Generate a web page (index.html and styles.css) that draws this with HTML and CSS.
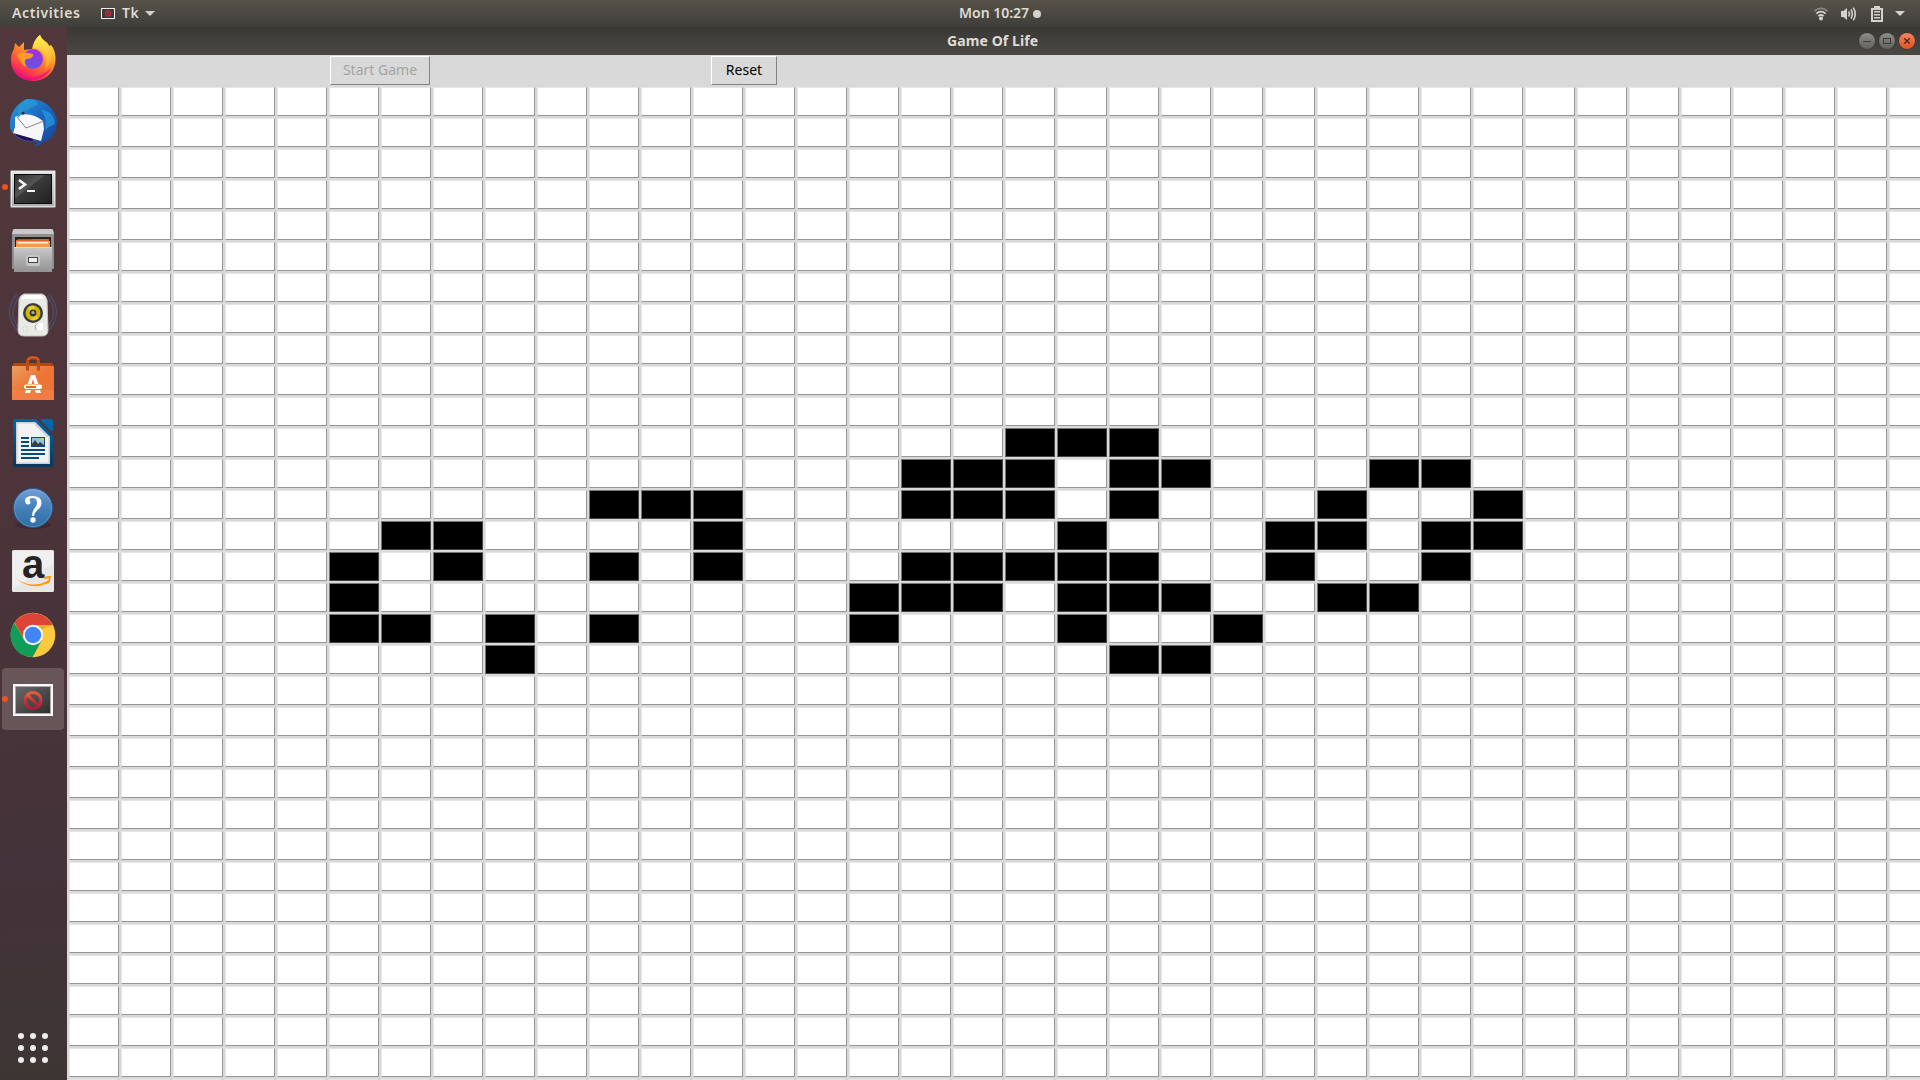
FILE: index.html
```html
<!DOCTYPE html>
<html lang="en">
<head>
<meta charset="utf-8">
<title>Game Of Life</title>
<link rel="stylesheet" href="styles.css">
</head>
<body>
<div class="desktop">
  <header class="topbar">
    <div class="topbar-left">
      <span class="activities">Activities</span>
      <svg class="app-mini" width="14" height="12" viewBox="0 0 14 12"><rect x=".5" y=".5" width="13" height="10" fill="#3b3b3b" stroke="#eee"/><circle cx="7" cy="5.5" r="2.6" fill="none" stroke="#c92a35" stroke-width="1.3"/><path d="M5.2 3.7l3.6 3.6" stroke="#c92a35" stroke-width="1.2"/></svg>
      <span class="app-name">Tk</span>
      <svg width="10" height="6" viewBox="0 0 10 6"><path d="M0 0h10L5 5z" fill="#d4d2cc"/></svg>
    </div>
    <div class="clock"><span class="clock-text">Mon 10:27</span><i class="clock-dot"></i></div>
    <div class="status">
      <svg width="14" height="14" viewBox="0 0 14 14" fill="none" stroke="#d4d2cc" stroke-width="1.7"><path d="M.5 4Q7-1.4 13.5 4" stroke="#8b8981"/><path d="M2.3 6.7Q7 2.6 11.7 6.7"/><path d="M4.3 9.2Q7 6.8 9.7 9.2"/><circle cx="7" cy="11.6" r="2" fill="#d4d2cc" stroke="none"/></svg>
      <svg width="16" height="14" viewBox="0 0 16 14" fill="none" stroke="#d4d2cc" stroke-width="1.6"><path d="M0 4h2.5L6 1v12L2.500 10H0z" fill="#d4d2cc" stroke="none"/><path d="M7.500 4.500Q9.500 7 7.500 9.500M10 2.500Q12.700 7 10 11.500M12.300 .6Q16.200 7 12.300 13.400"/></svg>
      <svg width="12" height="16" viewBox="0 0 12 16"><path d="M3 0h6v2h3v14H0V2h3zM2 4v10h8V4z" fill="#d4d2cc" fill-rule="evenodd"/><path d="M3 5h6v1.500H3zM3 8h6v1.500H3zM3 11h6v1.500H3z" fill="#d4d2cc"/></svg>
      <svg width="10" height="6" viewBox="0 0 10 6"><path d="M0 0h10L5 5z" fill="#d4d2cc"/></svg>
    </div>
  </header>

  <div class="workspace">
    <nav class="dock">
      <div class="dock-item">
        <svg width="48" height="48" viewBox="0 0 48 48">
          <defs>
            <linearGradient id="ffBody" x1=".85" y1="0" x2=".3" y2="1"><stop offset="0" stop-color="#fff44f"/><stop offset=".3" stop-color="#ffb62d"/><stop offset=".55" stop-color="#ff7a2b"/><stop offset=".8" stop-color="#ff3d48"/><stop offset="1" stop-color="#e5008c"/></linearGradient>
            <linearGradient id="ffFlame" x1="0" y1="0" x2="0" y2="1"><stop offset="0" stop-color="#fff44f"/><stop offset="1" stop-color="#ff9a28"/></linearGradient>
            <linearGradient id="ffGlobe" x1=".7" y1="0" x2=".3" y2="1"><stop offset="0" stop-color="#a62be0"/><stop offset="1" stop-color="#5a5be6"/></linearGradient>
          </defs>
          <path d="M31 0c2 6 8 6 9 11l2-1c5 6 5 14 4 19-2 10-11 17-22 17C11 46 2 37 2 25c0-5 1-8 3-11l1-6 4 4 5-5v8l8-1c1-6 4-11 8-14z" fill="url(#ffBody)"/>
          <path d="M31 0c2 6 9 8 11 16 2 9-2 15-6 18 2-8 0-15-4-19-4-1-7-3-8-1 0-7 4-12 7-14z" fill="url(#ffFlame)"/>
          <circle cx="24" cy="24" r="10" fill="url(#ffGlobe)"/>
          <path d="M8 20c5-4 9-2 16-1 1 3-3 5-7 5-2 2-1 5 1 8-6-1-7-8-10-12z" fill="#ff9b2a"/>
          <path d="M4 34c6 10 24 13 38-1-5 14-30 18-38 1z" fill="#e8107d" opacity=".75"/>
        </svg>
      </div>
      <div class="dock-item">
        <svg width="48" height="48" viewBox="0 0 48 48">
          <defs><linearGradient id="tbBlue" x1="0" y1="0" x2="1" y2="1"><stop offset="0" stop-color="#2d9ae0"/><stop offset=".5" stop-color="#1c66bd"/><stop offset="1" stop-color="#1b3f91"/></linearGradient></defs>
          <path d="M18 0C32-1 46 7 48 22c0 10-5 18-12 22l2-5c-4 5-7 8-13 8l5-5C14 45 4 37 1 29c-1-13 5-24 17-29z" fill="url(#tbBlue)"/>
          <path d="M4 32c2 6 11 10 20 10l-1-5z" fill="#260c55"/>
          <path d="M6 18l5-2q12-3 23 6l1 8-3 12L4 34l2-6z" fill="#f7f7f9"/>
          <path d="M8 18l9 11 18-7" fill="none" stroke="#888" stroke-width="1"/>
          <path d="M18 0c-6 2-11 8-9 19 4-4 4-7 10-8 2-3 8-4 10-6-3-4-7-5-11-5z" fill="#2793d4"/>
          <path d="M32 11c8 0 13 5 14 13-3 4-5 1-10 8 1-8 1-15-4-21z" fill="#249be3" opacity=".7"/>
          <circle cx="14" cy="14" r="1.500" fill="#302a30"/>
        </svg>
      </div>
      <div class="dock-item running">
        <svg width="48" height="48" viewBox="0 0 48 48">
          <defs>
            <linearGradient id="tmFrame" x1="0" y1="0" x2="0" y2="1"><stop offset="0" stop-color="#e6e6e6"/><stop offset="1" stop-color="#a9a9a9"/></linearGradient>
            <linearGradient id="tmScreen" x1="0" y1="0" x2="1" y2="1"><stop offset="0" stop-color="#333"/><stop offset=".4" stop-color="#555"/><stop offset=".43" stop-color="#3b3b3b"/><stop offset="1" stop-color="#202020"/></linearGradient>
          </defs>
          <rect x="1.500" y="7.500" width="45" height="37" rx="1" fill="url(#tmFrame)" stroke="#8b8b8b"/>
          <rect x="2.500" y="8.500" width="43" height="35" fill="none" stroke="#f4f4f4" stroke-opacity=".7"/>
          <rect x="5" y="11" width="38" height="30" fill="#0a0a0a"/>
          <rect x="6" y="12" width="36" height="28" fill="url(#tmScreen)"/>
          <path d="M10 17l6 4.500-6 4.500" fill="none" stroke="#f5f5f5" stroke-width="2.600"/><path d="M18 27h8v2h-8z" fill="#f5f5f5"/>
        </svg>
      </div>
      <div class="dock-item">
        <svg width="48" height="48" viewBox="0 0 48 48">
          <defs><linearGradient id="flGrey" x1="0" y1="0" x2="0" y2="1"><stop offset="0" stop-color="#c8c8c8"/><stop offset="1" stop-color="#939393"/></linearGradient></defs>
          <path d="M4 3q0-1 2-1h36q2 0 2 1l1 4v35H3V7z" fill="#8f8f8f"/>
          <path d="M4 3q0-1 2-1h36q2 0 2 1l1 4H3z" fill="#c9c9c9"/>
          <rect x="6" y="10" width="36" height="10" fill="#25201e"/>
          <path d="M9 12h31v7H7v-5z" fill="#c44a1e"/><path d="M7 13h16l1-1h16v2H7z" fill="#e0602a"/><path d="M7 14h34v6H7z" fill="#f39b48"/><path d="M9 15h30v1.500H9z" fill="#fff1df"/>
          <path d="M5 20h38v25H5z" fill="url(#flGrey)"/><path d="M5 20h38v1H5z" fill="#ddd"/>
          <rect x="17" y="28" width="14" height="11" rx="2" fill="#c5c5c5"/><rect x="19.500" y="30.500" width="9" height="5" fill="#eee" stroke="#444"/>
        </svg>
      </div>
      <div class="dock-item">
        <svg width="48" height="48" viewBox="0 0 48 48">
          <g fill="none" stroke="#4d5f96" stroke-width="1.300" opacity=".5"><path d="M8 3Q-7 21 8 39M11 5Q-2 21 9 36M40 3Q55 21 40 39M39 6Q50 21 39 36"/></g>
          <path d="M15 3h18q4 1 5 6l1 30q0 6-6 6H15q-6 0-6-6l1-30q1-5 5-6z" fill="#e9e9e6" stroke="#c4c4c0"/>
          <path d="M17 4h14q3 0 4 4H13q1-4 4-4z" fill="#fff"/>
          <circle cx="24" cy="22" r="10" fill="#3a3b3d"/><circle cx="24" cy="22" r="7.500" fill="#d3b500"/><path d="M24 22l-6-5a8 8 0 0 1 8-2zM24 22l6 5a8 8 0 0 1-8 2z" fill="#f2de3e" opacity=".6"/><circle cx="24" cy="22" r="3.400" fill="#34383b"/><circle cx="24" cy="21.500" r="1.600" fill="#aaa"/>
          <path d="M27 35l2-3h5v7h-5z" fill="#fff"/><path d="M27 39l-1-4 3-3" fill="none" stroke="#aaa"/><rect x="14.500" y="35.500" width="4" height="5" fill="none" stroke="#ddd"/>
        </svg>
      </div>
      <div class="dock-item">
        <svg width="48" height="48" viewBox="0 0 48 48">
          <defs><linearGradient id="swBag" x1="0" y1="0" x2="1" y2="1"><stop offset="0" stop-color="#e9a061"/><stop offset=".5" stop-color="#ee7434"/><stop offset="1" stop-color="#f0703a"/></linearGradient></defs>
          <path d="M5 8h38l2 4H3z" fill="#c0400f"/>
          <path d="M3 11h42v34H3z" fill="url(#swBag)"/><path d="M3 35h42v10H3z" fill="#fb8b57" opacity=".4"/>
          <path d="M18.500 15.500V7q0-4 4-4h3q4 0 4 4v8.500" fill="none" stroke="#c54616" stroke-width="3"/><path d="M19 5q1-3 4-3h2q4 0 5 3" fill="none" stroke="#f16b34"/>
          <path d="M22 20h4l3.500 9h-4L24 24l-1.500 5h-4zM17 35h5l-1 3h-5zM26 35h5l1 3h-5z" fill="#fff"/><rect x="15" y="29.500" width="18" height="4.500" rx="2" fill="#fff"/><path d="M17 31h10v2H17z" fill="#ec6228"/>
        </svg>
      </div>
      <div class="dock-item">
        <svg width="48" height="48" viewBox="0 0 48 48">
          <defs><linearGradient id="lwBlue" x1="0" y1="0" x2="0" y2="1"><stop offset="0" stop-color="#0067a7"/><stop offset="1" stop-color="#04395f"/></linearGradient></defs>
          <path d="M6 0h21l17 17v29q0 2-2 2H6q-2 0-2-2V2q0-2 2-2z" fill="url(#lwBlue)"/>
          <path d="M32 0h10q2 0 2 2v10h-2L32 2z" fill="#0067a7"/>
          <path d="M7 3h19l15 15v27H7z" fill="#cfcfcf"/><path d="M8.500 4.500h17l14 14v25h-31z" fill="#f2f2f2"/><path d="M26 3l15 15h-3L26 6z" fill="#ccd"/>
          <path d="M12 18h8v2h-8zM12 22h8v2h-8zM12 26h8v2h-8zM12 30h24v2H12zM12 34h24v2H12zM12 38h18v2H12z" fill="#064b7a"/>
          <path d="M22 18h14v10H22z" fill="#064b7a"/><path d="M23 19h12v8H23z" fill="#88c5ea"/><path d="M32 19h3v3q-3 0-3-3z" fill="#f4c52d"/><path d="M23 27v-2l3-4 3 4 2-2 4 3v1z" fill="#3d3d3d"/>
        </svg>
      </div>
      <div class="dock-item">
        <svg width="48" height="48" viewBox="0 0 48 48">
          <defs><linearGradient id="hpBlue" x1="0" y1="0" x2="0" y2="1"><stop offset="0" stop-color="#759fd9"/><stop offset=".5" stop-color="#4480b9"/><stop offset="1" stop-color="#2d6ea5"/></linearGradient></defs>
          <ellipse cx="24" cy="42" rx="18" ry="4" fill="#2b1b20" opacity=".4"/>
          <circle cx="24" cy="25" r="19.500" fill="url(#hpBlue)" stroke="#235a8e"/><circle cx="24" cy="25" r="18.500" fill="none" stroke="#8db6df" stroke-opacity=".4"/>
          <path d="M16 19q-1-6 7.500-6 9 0 9 7 0 4-4 7-3.500 3-3.500 6h-2q0-4 2-7 3-3 3-6 0-5-4.500-5-3 0-3 2l1 2q0 2.500-2.500 2.500-2 0-3-2.500z" fill="#fff"/><circle cx="24" cy="37" r="2.700" fill="#fff"/>
        </svg>
      </div>
      <div class="dock-item">
        <svg class="amazon" width="48" height="48" viewBox="0 0 48 48">
          <rect x="3" y="3" width="42" height="42" rx="1.500" fill="#e7e7e7"/><path d="M4 4h40v13L4 41z" fill="#f0f0f0"/>
          <text x="24" y="31" class="amazon-a">a</text>
          <path d="M6 31q17 12 34 2l1 2q-18 10-35-4z" fill="#ff9900"/><path d="M35 31q5-1 6-1 0 3-2 6" fill="none" stroke="#ff9900" stroke-width="1.800"/>
        </svg>
      </div>
      <div class="dock-item">
        <svg width="48" height="48" viewBox="0 0 48 48">
          <circle cx="24" cy="24" r="22.300" fill="#fdca3f"/>
          <path d="M24 24L5.700 11.500A22.300 22.300 0 0 1 43.600 14H24z" fill="#db4437"/>
          <path d="M5.200 12A22.300 22.300 0 0 0 23.500 46.300L33 29 24 24 15 28z" fill="#0f9d58"/>
          <path d="M5.500 11.700L15 28l9-14z" fill="#db4437"/><path d="M24 14h19.600L33 18z" fill="#e6ac2d"/>
          <circle cx="24" cy="24" r="10.200" fill="#f3f6fb"/><circle cx="24" cy="24" r="8.200" fill="#4285f4"/>
        </svg>
      </div>
      <div class="dock-item running active">
        <svg width="48" height="48" viewBox="0 0 48 48">
          <defs><linearGradient id="tkScreen" x1="0" y1="0" x2="1" y2="1"><stop offset="0" stop-color="#686868"/><stop offset="1" stop-color="#303030"/></linearGradient><linearGradient id="tkRed" x1="0" y1="0" x2="0" y2="1"><stop offset="0" stop-color="#e3603f"/><stop offset=".5" stop-color="#cf3038"/><stop offset="1" stop-color="#b01e33"/></linearGradient></defs>
          <rect x="4" y="9" width="40" height="32" fill="#fafafa"/><rect x="6" y="11" width="36" height="28" fill="#aaa"/><rect x="7" y="12" width="34" height="26" fill="url(#tkScreen)"/>
          <g fill="none" stroke="url(#tkRed)" stroke-width="3"><circle cx="24" cy="25.500" r="8"/><path d="M18.500 20L29.500 31"/></g>
        </svg>
      </div>
      <svg class="apps-grid" width="30" height="30" viewBox="0 0 30 30" fill="#eeeeec"><circle cx="3" cy="3" r="3"/><circle cx="15" cy="3" r="3"/><circle cx="27" cy="3" r="3"/><circle cx="3" cy="15" r="3"/><circle cx="15" cy="15" r="3"/><circle cx="27" cy="15" r="3"/><circle cx="3" cy="27" r="3"/><circle cx="15" cy="27" r="3"/><circle cx="27" cy="27" r="3"/></svg>
    </nav>

    <main class="window">
      <div class="titlebar">
        <span class="title">Game Of Life</span>
        <div class="window-controls">
          <svg class="control" width="16" height="16" viewBox="0 0 16 16"><path d="M4 8.500h8" stroke="#3c3b37"/></svg>
          <svg class="control" width="16" height="16" viewBox="0 0 16 16"><rect x="4.500" y="5.500" width="7" height="5" fill="none" stroke="#3c3b37"/></svg>
          <svg class="control close" width="16" height="16" viewBox="0 0 16 16"><path d="M5.200 5.200l5.600 5.600M10.800 5.200l-5.600 5.600" stroke="#4a2a1c" stroke-width="1.300"/></svg>
        </div>
      </div>
      <div class="toolbar">
        <button class="tk-button start" disabled>Start Game</button>
        <button class="tk-button reset">Reset</button>
      </div>
      <div class="board" id="board"></div>
    </main>
  </div>
</div>
<script src="board.js"></script>
</body>
</html>
```
FILE: styles.css
```css
* { box-sizing: border-box; }
body { margin: 0; overflow: hidden; font-family: "Noto Sans", "Open Sans", sans-serif; }
svg { display: block; flex: none; }
.desktop { width: 1920px; height: 1080px; display: flex; flex-direction: column; overflow: hidden; }

.topbar { height: 27px; flex: none; display: grid; grid-template-columns: 959px 82px 1fr; align-items: center; background: linear-gradient(#57534a, #3f3e39); color: #dfdbd2; font-size: 14px; font-weight: 600; line-height: 25px; }
.topbar-left { display: flex; align-items: center; padding-left: 12px; }
.activities { width: 89px; padding-bottom: 2px; white-space: nowrap; letter-spacing: 0.6px; }
.app-name { margin: 0 5px 0 7px; padding-bottom: 2px; width: 18px; letter-spacing: 0.5px; }
.clock { display: flex; align-items: center; gap: 5px; white-space: nowrap; }
.clock-text { width: 69px; padding-bottom: 2px; }
.clock-dot { width: 8px; height: 8px; flex: none; border-radius: 50%; background: #d4d2cc; }
.status { display: flex; align-items: center; justify-content: flex-end; padding-right: 15px; }
.status svg:nth-child(1) { margin-right: 13px; }
.status svg:nth-child(2) { margin-right: 14px; }
.status svg:nth-child(3) { margin-right: 12px; }

.workspace { flex: 1; min-height: 0; display: flex; }
.dock { width: 67px; flex: none; display: flex; flex-direction: column; background: linear-gradient(175deg, #52383c 0%, #4c343a 45%, #44333a 80%, #3d3534 100%); }
.dock-item { width: 62px; height: 62px; margin: 1px 0 1px 2px; border-radius: 4px; display: flex; align-items: center; justify-content: center; flex: none; position: relative; }
.dock-item.active { background: #67555a; }
.dock-item.running::before { content: ""; position: absolute; left: 0; top: 28px; width: 6px; height: 6px; border-radius: 50%; background: #e95420; }
.apps-grid { margin: auto 0 17px 18px; }
.amazon { overflow: visible; }
.amazon-a { font: bold 40px "Liberation Sans", sans-serif; fill: #242424; text-anchor: middle; }

.window { flex: 1; min-width: 0; display: flex; flex-direction: column; background: #d9d9d9; }
.titlebar { height: 28px; flex: none; display: flex; align-items: center; justify-content: space-between; padding: 0 5px 0 880px; background: linear-gradient(#393834, #4b4943); color: #dfdbd2; font-size: 14px; font-weight: 700; }
.title { white-space: nowrap; line-height: 28px; letter-spacing: 0.1px; }
.window-controls { display: flex; gap: 4px; }
.control { border-radius: 50%; background: linear-gradient(#8c8a84, #64625c); box-shadow: 0 0 0 .5px #302f2b; }
.control.close { background: linear-gradient(#f58363, #e4531f); }

.toolbar { height: 32px; flex: none; display: flex; align-items: flex-start; padding: 1px 0 0 263px; }
.tk-button { height: 29px; padding: 0 0 2px; border: 1px solid; border-color: #fff #828282 #828282 #fff; border-radius: 0; background: #d9d9d9; color: #000; font: 14px/25px "Noto Sans", sans-serif; white-space: nowrap; }
.tk-button:disabled { color: #a3a3a3; }
.start { width: 100px; margin-right: 281px; }
.reset { width: 66px; }

.board { flex: 1; min-height: 0; overflow: hidden; display: grid; grid-template-columns: repeat(36, 50px); grid-auto-rows: 29px; gap: 2px; padding-left: 2px; }
.cell { background: #fff; border: 1px solid; border-color: #e6e6e6 #959595 #959595 #e6e6e6; }
.cell.alive { background: #000; border-color: #777 #444 #444 #777; }
```
FILE: board.js
```js
const COLUMNS = 36;
const ROWS = 33;
const alive = {
  11: [18, 19, 20],
  12: [16, 17, 18, 20, 21, 25, 26],
  13: [10, 11, 12, 16, 17, 18, 20, 24, 27],
  14: [6, 7, 12, 19, 23, 24, 26, 27],
  15: [5, 7, 10, 12, 16, 17, 18, 19, 20, 23, 26],
  16: [5, 15, 16, 17, 19, 20, 21, 24, 25],
  17: [5, 6, 8, 10, 15, 19, 22],
  18: [8, 20, 21]
};
const board = document.getElementById("board");
for (let row = 0; row < ROWS; row++) {
  for (let col = 0; col < COLUMNS; col++) {
    const cell = document.createElement("div");
    const on = alive[row] && alive[row].includes(col);
    cell.className = on ? "cell alive" : "cell";
    board.appendChild(cell);
  }
}
```
